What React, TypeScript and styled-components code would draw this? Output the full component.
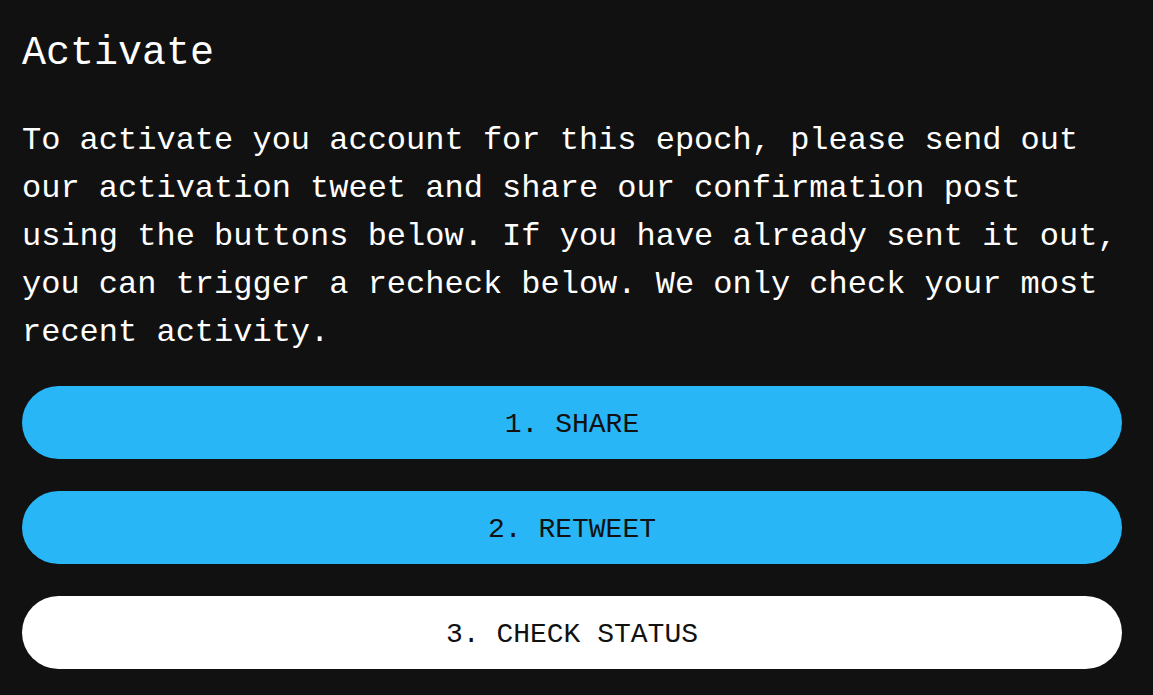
import { FC } from 'react';
import styled, { createGlobalStyle } from 'styled-components';

const GlobalStyle = createGlobalStyle`
	html,
	body {
		margin: 0;
		padding: 0;
		background: #111111;
	}
	body {
		font-family: 'Liberation Mono', 'DejaVu Sans Mono', monospace;
		color: #ffffff;
	}
`;

const Page = styled.div`
	padding: 30px 31px 26px 22px;
	display: flex;
	flex-direction: column;
`;

const Title = styled.h1`
	margin: 0;
	font-size: 40px;
	line-height: 48px;
	font-weight: 400;
`;

const Text = styled.p`
	margin: 38.5px 0 0;
	font-size: 32px;
	line-height: 48px;
	font-weight: 400;
`;

const Actions = styled.div`
	margin-top: 29.5px;
	display: flex;
	flex-direction: column;
	gap: 32px;
`;

type ActionProps = {
	$variant: 'primary' | 'light';
};

const ActionButton = styled.button<ActionProps>`
	height: 73px;
	width: 100%;
	border: none;
	border-radius: 999px;
	display: flex;
	align-items: center;
	justify-content: center;
	padding: 4px 0 0;
	font-family: inherit;
	font-size: 28px;
	text-transform: uppercase;
	color: #111111;
	cursor: pointer;
	background-color: ${({ $variant }) => ($variant === 'primary' ? '#29b6f6' : '#ffffff')};
`;

const actions: { label: string; variant: 'primary' | 'light' }[] = [
	{ label: '1. Share', variant: 'primary' },
	{ label: '2. Retweet', variant: 'primary' },
	{ label: '3. Check status', variant: 'light' },
];

const App: FC = () => {
	return (
		<>
			<GlobalStyle />
			<Page>
				<Title>Activate</Title>
				<Text>
					To activate you account for this epoch, please send out our activation tweet and share
					our confirmation post using the buttons below. If you have already sent it out, you can
					trigger a recheck below. We only check your most recent activity.
				</Text>
				<Actions>
					{actions.map((el, idx) => (
						<ActionButton key={idx} $variant={el.variant}>
							{el.label}
						</ActionButton>
					))}
				</Actions>
			</Page>
		</>
	);
};

export default App;
